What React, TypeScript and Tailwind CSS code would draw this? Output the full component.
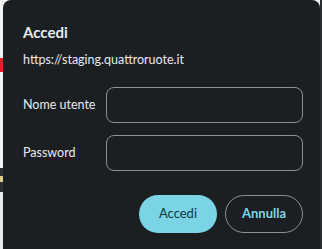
export default function App() {
  return (
    <div
      className="grid h-[249px] w-[322px] grid-cols-[3px_317px_2px] overflow-hidden bg-[#f3f3f3]"
      style={{ fontFamily: 'Lato, "Noto Sans", sans-serif' }}
    >
      {/* page behind the dialog, only a sliver shows */}
      <div className="flex flex-col">
        <div className="h-[58px] bg-[#f3f3f3]" />
        <div className="h-[14px] bg-[#e0202a]" />
        <div className="h-[96px] bg-[#f3f3f3]" />
        <div className="h-[8px] bg-[#2e2f30]" />
        <div className="h-[6px] bg-[#d8cf8a]" />
        <div className="h-[10px] bg-[#2e2f30]" />
        <div className="flex-1 bg-[#e9e9e9]" />
      </div>

      <div className="min-w-0 rounded-t-[8px] bg-[#1c1f22] pl-[20px] pr-[17px] pt-[22px] text-[#e8eaed]">
        <h1 className="text-[15px] font-bold leading-[20px]">Accedi</h1>
        <p className="mt-[9px] text-[12.5px] leading-[18px]">https://staging.quattroruote.it</p>

        <div className="mt-[18px] flex flex-col gap-[12px]">
          <div className="flex items-center">
            <label className="w-[83px] shrink-0 text-[12.5px]">Nome utente</label>
            <input className="h-[36px] w-[197px] min-w-0 rounded-[8px] border border-[#8c9196] bg-transparent px-2 text-[13px] outline-none" />
          </div>
          <div className="flex items-center">
            <label className="w-[83px] shrink-0 text-[12.5px]">Password</label>
            <input
              type="password"
              className="h-[36px] w-[197px] min-w-0 rounded-[8px] border border-[#8c9196] bg-transparent px-2 text-[13px] outline-none"
            />
          </div>
        </div>

        <div className="mt-[24px] flex justify-end gap-[8px]">
          <button className="h-[38px] w-[78px] rounded-full bg-[#7ad4e6] text-[13px] text-[#0d3a44]">
            Accedi
          </button>
          <button className="h-[38px] w-[78px] rounded-full border border-[#8c9196] text-[13px] font-bold text-[#7fd6e9]">
            Annulla
          </button>
        </div>
      </div>

      <div className="bg-[#2b2e31]" />
    </div>
  );
}
